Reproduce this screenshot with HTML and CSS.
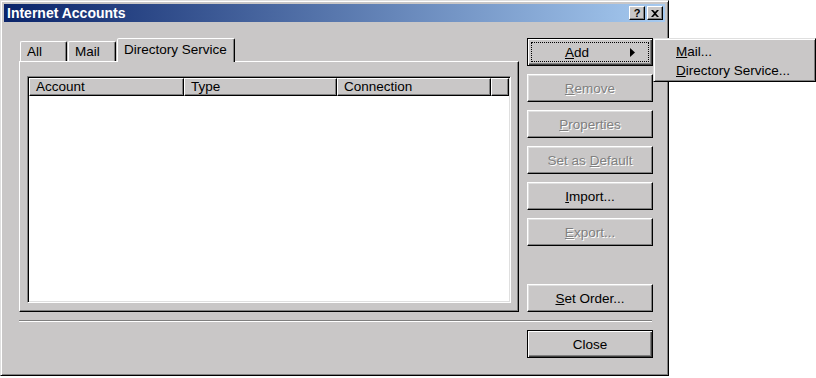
FILE: index.html
```html
<!DOCTYPE html>
<html lang="en">
<head>
    <meta charset="UTF-8">
    <title>Internet Accounts</title>
    <link rel="stylesheet" href="styles.css">
</head>
<body>
    <div class="window">
        <div class="titlebar">
            <span class="title">Internet Accounts</span>
            <div class="caption-buttons">
                <span class="cap-btn cap-help">?</span>
                <span class="cap-btn cap-close">
                    <svg width="8" height="7" viewBox="0 0 8 7"><path d="M0 0h2l2 2 2-2h2L5 3.5 8 7H6L4 5 2 7H0l3-3.5z" fill="#000"/></svg>
                </span>
            </div>
        </div>

        <div class="main">
            <div class="left">
                <div class="tabs">
                    <div class="tab tab-all">All</div>
                    <div class="tab tab-mail">Mail</div>
                    <div class="tab tab-active">Directory Service</div>
                </div>
                <div class="panel">
                    <div class="listview">
                        <div class="list-header">
                            <div class="col col-account">Account</div>
                            <div class="col col-type">Type</div>
                            <div class="col col-conn">Connection</div>
                            <div class="col col-fill"></div>
                        </div>
                    </div>
                </div>
            </div>

            <div class="right">
                <button class="btn btn-focus btn-add">
                    <span class="focus-rect">
                        <span class="btn-label"><u>A</u>dd</span>
                        <span class="arrow"><svg width="5" height="9" viewBox="0 0 5 9"><path d="M0 0l5 4.5L0 9z" fill="#000"/></svg></span>
                    </span>
                </button>
                <button class="btn disabled"><u>R</u>emove</button>
                <button class="btn disabled"><u>P</u>roperties</button>
                <button class="btn disabled">Set as <u>D</u>efault</button>
                <button class="btn"><u>I</u>mport...</button>
                <button class="btn disabled"><u>E</u>xport...</button>
                <button class="btn btn-order"><u>S</u>et Order...</button>
            </div>
        </div>

        <div class="separator"></div>

        <div class="footer">
            <button class="btn btn-default">Close</button>
        </div>

        <div class="menu">
            <div class="menu-item"><u>M</u>ail...</div>
            <div class="menu-item"><u>D</u>irectory Service...</div>
        </div>
    </div>
</body>
</html>
```

FILE: styles.css
```css
body {
    margin: 0;
    background: #fff;
    font-family: "Liberation Sans", Arial, sans-serif;
    font-size: 13.5px;
    color: #000;
}
.window {
    position: relative;
    width: 669px;
    height: 376px;
    box-sizing: border-box;
    padding: 3px;
    background: #c9c7c7;
    border: 1px solid;
    border-color: #dfdfdf #000 #000 #dfdfdf;
    box-shadow: inset 1px 1px #fff, inset -1px -1px #808080;
}
.titlebar {
    height: 18px;
    display: flex;
    align-items: center;
    justify-content: space-between;
    padding: 0 2px 0 3px;
    background: linear-gradient(to right, #0a246a, #a6caf0);
}
.title {
    color: #fff;
    font-weight: bold;
    font-size: 14px;
}
.caption-buttons {
    display: flex;
    gap: 2px;
}
.cap-btn {
    width: 16px;
    height: 14px;
    box-sizing: border-box;
    display: flex;
    align-items: center;
    justify-content: center;
    background: #c9c7c7;
    border: 1px solid;
    border-color: #fff #000 #000 #fff;
    box-shadow: inset -1px -1px #808080;
    font-weight: bold;
    font-size: 11px;
    line-height: 1;
}
.main {
    display: flex;
    gap: 8px;
    padding: 16px 0 0 15px;
}
.left {
    width: 500px;
}
.tabs {
    display: flex;
    align-items: flex-end;
    height: 23px;
}
.tab {
    height: 20px;
    box-sizing: border-box;
    padding: 2px 0 0 6px;
    border: 1px solid;
    border-bottom: none;
    border-color: #fff #000 transparent #fff;
    border-radius: 2px 2px 0 0;
    box-shadow: inset -1px 0 #808080;
}
.tab-all {
    width: 47px;
    margin-left: 1px;
}
.tab-mail {
    width: 48px;
    margin-left: 1px;
}
.tab-active {
    position: relative;
    z-index: 1;
    width: 118px;
    height: 24px;
    margin-left: 1px;
    margin-bottom: -1px;
    padding: 3px 0 0 6px;
    background: #c9c7c7;
}
.panel {
    width: 500px;
    height: 251px;
    box-sizing: border-box;
    padding: 14px 7px 0 7px;
    border: 1px solid;
    border-color: #fff #000 #000 #fff;
    box-shadow: inset -1px -1px #808080;
}
.listview {
    height: 227px;
    box-sizing: border-box;
    background: #fff;
    border: 1px solid;
    border-color: #808080 #fff #fff #808080;
    box-shadow: inset 1px 1px #000, inset -1px -1px #dfdfdf;
    padding: 1px;
}
.list-header {
    display: flex;
    height: 18px;
}
.col {
    box-sizing: border-box;
    height: 18px;
    padding: 0 0 0 6px;
    background: #c9c7c7;
    border: 1px solid;
    border-color: #fff #000 #000 #fff;
    box-shadow: inset -1px -1px #808080;
}
.col-account {
    width: 155px;
}
.col-type {
    width: 153px;
}
.col-conn {
    width: 154px;
}
.col-fill {
    flex: 1;
}
.right {
    width: 126px;
    height: 274px;
    display: flex;
    flex-direction: column;
    gap: 8px;
}
.btn {
    width: 126px;
    height: 28px;
    box-sizing: border-box;
    padding: 0;
    font-family: "Liberation Sans", Arial, sans-serif;
    font-size: 13.5px;
    color: #000;
    background: #c9c7c7;
    border: 1px solid;
    border-color: #fff #000 #000 #fff;
    box-shadow: inset -1px -1px #808080, inset 1px 1px #dfdfdf;
}
.btn.disabled {
    color: #808080;
    text-shadow: 1px 1px 0 #fff;
}
.btn-focus {
    border-color: #000;
    box-shadow: inset 1px 1px #fff, inset -1px -1px #404040, inset -2px -2px #808080;
    padding: 3px;
}
.focus-rect {
    display: flex;
    align-items: center;
    height: 100%;
    box-sizing: border-box;
    border: 1px dotted #000;
}
.btn-label {
    flex: 1;
    text-align: center;
}
.arrow {
    width: 26px;
    display: flex;
    align-items: center;
    padding-left: 8px;
    box-sizing: border-box;
}
.btn-order {
    margin-top: auto;
}
.separator {
    width: 633px;
    margin: 8px 0 0 15px;
    border-top: 1px solid #808080;
    border-bottom: 1px solid #fff;
}
.footer {
    display: flex;
    justify-content: flex-end;
    padding: 8px 12px 0 0;
}
.btn-default {
    border-color: #000;
    box-shadow: inset 1px 1px #fff, inset -1px -1px #404040, inset -2px -2px #808080;
}
.menu {
    position: absolute;
    left: 652px;
    top: 37px;
    width: 163px;
    box-sizing: border-box;
    padding: 3px 2px 1px;
    background: #c9c7c7;
    border: 1px solid;
    border-color: #dfdfdf #000 #000 #dfdfdf;
    box-shadow: inset 1px 1px #fff, inset -1px -1px #808080;
}
.menu-item {
    height: 19px;
    line-height: 19px;
    padding-left: 20px;
}
```
